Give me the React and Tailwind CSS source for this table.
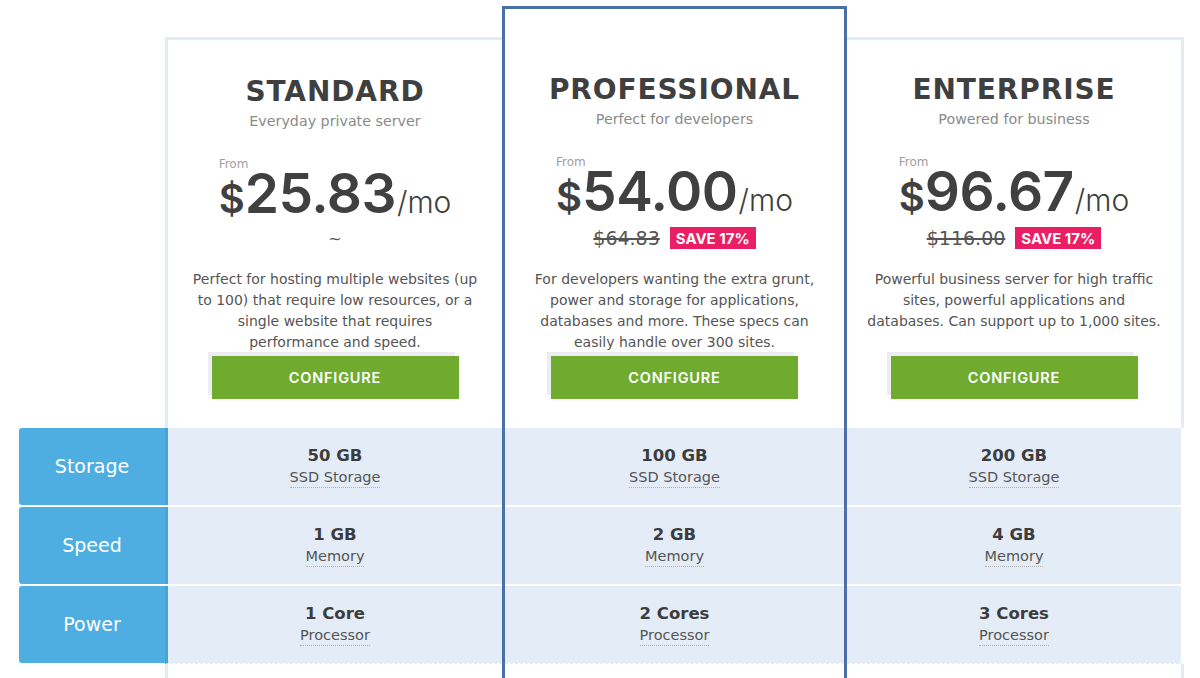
import React from "react";

const plans = [
  {
    name: "STANDARD",
    sub: "Everyday private server",
    price: "25.83",
    old: null,
    desc: [
      "Perfect for hosting multiple websites (up",
      "to 100) that require low resources, or a",
      "single website that requires",
      "performance and speed.",
    ],
    feats: [
      ["50 GB", "SSD Storage"],
      ["1 GB", "Memory"],
      ["1 Core", "Processor"],
    ],
  },
  {
    name: "PROFESSIONAL",
    sub: "Perfect for developers",
    price: "54.00",
    old: "$64.83",
    desc: [
      "For developers wanting the extra grunt,",
      "power and storage for applications,",
      "databases and more. These specs can",
      "easily handle over 300 sites.",
    ],
    feats: [
      ["100 GB", "SSD Storage"],
      ["2 GB", "Memory"],
      ["2 Cores", "Processor"],
    ],
  },
  {
    name: "ENTERPRISE",
    sub: "Powered for business",
    price: "96.67",
    old: "$116.00",
    desc: [
      "Powerful business server for high traffic",
      "sites, powerful applications and",
      "databases. Can support up to 1,000 sites.",
    ],
    feats: [
      ["200 GB", "SSD Storage"],
      ["4 GB", "Memory"],
      ["3 Cores", "Processor"],
    ],
  },
];

function HeaderContent({ plan, raised }) {
  return (
    <div className="flex flex-col items-center">
      <h2 className="font-['DejaVu_Sans',sans-serif] text-[28px] leading-[32px] font-bold tracking-[0.9px] text-[#3f3f3f]">
        {plan.name}
      </h2>
      <p className="mt-[2.5px] text-[14.25px] leading-[20px] text-[#8a8a8a]">{plan.sub}</p>
      <div className="mt-[27px] flex flex-col items-start">
        <span className="text-[12px] leading-[12px] text-[#a0a0a0]">From</span>
        <div className="-mt-[4px] flex items-baseline text-[#404040] font-['Inter',sans-serif]">
          <span className="text-[40px] leading-none font-semibold">$</span>
          <span className="text-[55px] leading-none font-semibold tracking-[-0.5px]">{plan.price}</span>
          <span className="ml-[1px] text-[30px] leading-none font-light">/mo</span>
        </div>
      </div>
      <div className="mt-[8.5px] h-[22px] flex items-center gap-[10px]">
        {plan.old ? (
          <>
            <span className="text-[19px] leading-none text-[#555] line-through decoration-[1.5px]">{plan.old}</span>
            <span className="h-[22px] px-[6px] flex items-center bg-[#e91e63] text-white font-['Inter',sans-serif] font-bold text-[15px] leading-none">
              SAVE 17%
            </span>
          </>
        ) : (
          <span className="-mt-[2px] text-[16px] leading-none text-[#555]">~</span>
        )}
      </div>
      <div className={`${raised ? "mt-[19.5px]" : "mt-[17.5px]"} h-[84px] text-center text-[14px] leading-[21px] text-[#555]`}>
        {plan.desc.map((l) => (
          <div key={l} className="whitespace-nowrap">{l}</div>
        ))}
      </div>
      <button className="mt-[3.5px] w-[247px] h-[43px] bg-[#6fab2f] shadow-[-4px_-4px_0_#ececf1] text-white font-['Inter',sans-serif] text-[14.5px] font-semibold tracking-[0.8px]">
        CONFIGURE
      </button>
    </div>
  );
}

function FeatureCells({ feats, cellBorder }) {
  return (
    <div className="flex flex-col gap-[2px]">
      {feats.map(([v, s], i) => (
        <div
          key={s}
          className={`${i === 2 ? "h-[78px] border-b [border-bottom-style:dashed] border-b-[#e4ecf7] bg-clip-padding" : "h-[77px]"} ${cellBorder} bg-[#e4ecf7] flex flex-col items-center justify-center`}
        >
          <span className="font-bold text-[16.5px] leading-[22px] text-[#3c3c3c]">{v}</span>
          <span className="text-[14.5px] leading-[20px] text-[#555] border-b border-dotted border-[#b0b0b0]">{s}</span>
        </div>
      ))}
    </div>
  );
}

export default function App() {
  const [std, pro, ent] = plans;
  return (
    <div className="w-[1200px] h-[678px] overflow-hidden bg-white font-['DejaVu_Sans',sans-serif]">
      <div className="flex items-start pl-[19px] pt-[6px]">
        {/* labels */}
        <div className="w-[146px] mt-[422px] flex flex-col gap-[2px]">
          {["Storage", "Speed", "Power"].map((l) => (
            <div
              key={l}
              className="h-[77px] rounded-l-[3px] bg-[#4eaee1] text-white text-[19px] flex items-center justify-center"
            >
              {l}
            </div>
          ))}
        </div>

        {/* standard */}
        <div className="w-[337px] mt-[31px] flex flex-col">
          <div className="h-[391px] border-l-[3px] border-t-[3px] border-[#e4ebf5] pt-[36.3px]">
            <HeaderContent plan={std} />
          </div>
          <FeatureCells feats={std.feats} cellBorder="border-l-[3px] border-l-[#46a3d9]" />
          <div className="h-[40px] border-l-[3px] border-[#e4ebf5]" />
        </div>

        {/* professional */}
        <div className="w-[345px] h-[700px] border-[3px] border-b-0 border-[#4b6fa7] flex flex-col">
          <div className="h-[419px] pt-[65.3px]">
            <HeaderContent plan={pro} raised />
          </div>
          <FeatureCells feats={pro.feats} cellBorder="" />
        </div>

        {/* enterprise */}
        <div className="w-[337px] mt-[31px] flex flex-col">
          <div className="h-[391px] border-r-[3px] border-t-[3px] border-[#e4ebf5] pt-[34.3px]">
            <HeaderContent plan={ent} raised />
          </div>
          <FeatureCells feats={ent.feats} cellBorder="border-r-[3px] border-r-white" />
          <div className="h-[40px] border-r-[3px] border-[#e4ebf5]" />
        </div>
      </div>
    </div>
  );
}
